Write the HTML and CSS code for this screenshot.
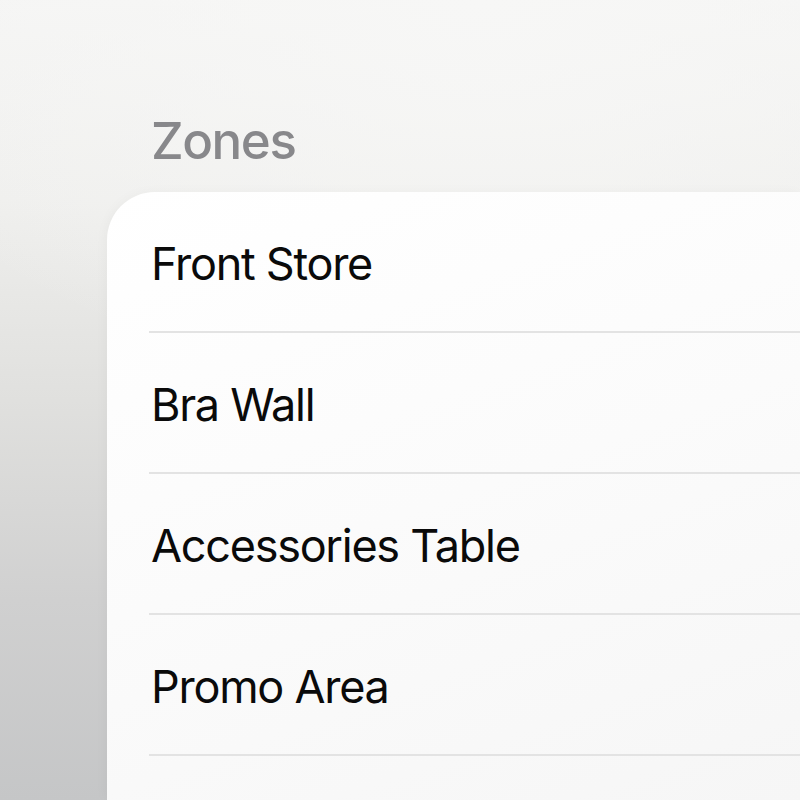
FILE: index.html
```html
<!DOCTYPE html>
<html lang="en">
<head>
<meta charset="utf-8">
<title>Zones</title>
<link rel="stylesheet" href="styles.css">
</head>
<body>
<main class="page">
  <h1 class="title">Zones</h1>
  <section class="card">
    <ul class="zone-list">
      <li class="zone">Front Store</li>
      <li class="zone">Bra Wall</li>
      <li class="zone">Accessories Table</li>
      <li class="zone">Promo Area</li>
    </ul>
  </section>
</main>
</body>
</html>
```
FILE: styles.css
```css
html, body {
  margin: 0;
  padding: 0;
  height: 100%;
  overflow: hidden;
}
body {
  font-family: Inter, "Liberation Sans", sans-serif;
  background:
    radial-gradient(ellipse 120% 70% at 60% 0%, rgba(247,247,246,1) 0%, rgba(247,247,246,0) 70%),
    linear-gradient(to bottom, #f5f5f4 0%, #efefed 25%, #e0e0de 50%, #d0d0d0 75%, #c5c6c7 100%);
}
.page {
  width: 800px;
  height: 800px;
  padding-top: 110px;
  box-sizing: border-box;
  display: flex;
  flex-direction: column;
}
.title {
  margin: 0 0 20px 151px;
  font-size: 51px;
  line-height: 62px;
  font-weight: 500;
  letter-spacing: -0.028em;
  color: #88888b;
}
.card {
  margin-left: 107px;
  flex: 1;
  background: linear-gradient(160deg, #ffffff 0%, #fbfbfb 50%, #f6f6f6 100%);
  border-top-left-radius: 48px;
  box-shadow: -2px 0 12px rgba(0,0,0,0.03);
  padding-left: 42px;
}
.zone-list {
  list-style: none;
  margin: 0;
  padding: 0;
}
.zone {
  display: flex;
  align-items: center;
  padding-top: 3px;
  padding-left: 2px;
  box-sizing: border-box;
  height: 141px;
  border-bottom: 2px solid #e3e3e3;
  font-size: 45px;
  letter-spacing: -0.028em;
  color: #0a0a0a;
}
```
